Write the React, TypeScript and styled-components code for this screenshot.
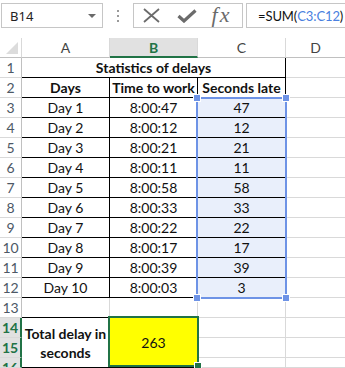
import { Fragment } from "react";
import styled, { createGlobalStyle } from "styled-components";

const GlobalStyle = createGlobalStyle`
  body {
    margin: 0;
    background: #fff;
    font-family: Lato, "Liberation Sans", sans-serif;
  }
`;

const GREEN = "#217346";
const GRID = "#d9d9d9";
const INK = "#111";

const Window = styled.div`
  width: 345px;
  height: 368px;
  overflow: hidden;
  background: #fff;
`;

/* ---------- formula bar ---------- */

const Bar = styled.div`
  display: flex;
  height: 25px;
  margin-top: 3px;
  padding-left: 1px;
  margin-bottom: 10px;
`;

const NameBox = styled.div`
  box-sizing: border-box;
  width: 102px;
  flex: none;
  border: 1px solid #c6c6c6;
  display: flex;
  align-items: center;
  justify-content: space-between;
  padding: 0 6px 0 8px;
  font-family: "Noto Sans", sans-serif;
  font-size: 13px;
  color: #222;
`;

const DropArrow = styled.span`
  width: 0;
  height: 0;
  border-left: 4px solid transparent;
  border-right: 4px solid transparent;
  border-top: 4px solid #6a6a6a;
`;

const Dots = styled.div`
  width: 30px;
  flex: none;
  display: flex;
  flex-direction: column;
  align-items: center;
  justify-content: center;
  gap: 3px;

  span {
    width: 2px;
    height: 2px;
    background: #9a9a9a;
  }
`;

const Buttons = styled.div`
  box-sizing: border-box;
  width: 110px;
  flex: none;
  border: 1px solid #c6c6c6;
  display: flex;
  align-items: center;
`;

const IconSlot = styled.div`
  width: 35px;
  height: 100%;
  display: flex;
  align-items: center;
  justify-content: center;
`;

const Fx = styled.span`
  font-family: "Liberation Serif", serif;
  font-style: italic;
  font-size: 22px;
  letter-spacing: 2px;
  color: #6a6a6a;
  line-height: 1;
  margin-top: -2px;
`;

const FormulaBox = styled.div`
  box-sizing: border-box;
  width: 240px;
  flex: none;
  margin-left: 3px;
  border: 1px solid #c6c6c6;
  border-right: none;
  display: flex;
  align-items: center;
  padding-left: 11px;
  font-size: 13px;
  letter-spacing: -0.1px;
  color: #111;
  white-space: nowrap;
`;

const Ref = styled.span`
  color: #4a7fe0;
`;

/* ---------- sheet ---------- */

const Sheet = styled.div`
  position: relative;
  display: grid;
  grid-template-columns: 22px 88px 88px 88px 60px;
  grid-template-rows: repeat(16, 20px) 10px;
`;

type CellProps = {
  $col?: string;
  $row?: string;
  $right?: string;
  $bottom?: string;
  $bold?: boolean;
  $bg?: string;
};

const Cell = styled.div<CellProps>`
  box-sizing: border-box;
  grid-column: ${(p) => p.$col || "auto"};
  grid-row: ${(p) => p.$row || "auto"};
  border-right: 1px solid ${(p) => p.$right || GRID};
  border-bottom: 1px solid ${(p) => p.$bottom || GRID};
  background: ${(p) => p.$bg || "#fff"};
  display: flex;
  align-items: center;
  justify-content: center;
  text-align: center;
  font-size: 14px;
  line-height: 19px;
  font-weight: ${(p) => (p.$bold ? 700 : 400)};
  color: ${INK};
  white-space: nowrap;
  overflow: hidden;
`;

const Corner = styled.div`
  position: relative;
  box-sizing: border-box;
  border-right: 1px solid ${GRID};
  border-bottom: 1px solid #c0c0c0;

  &::after {
    content: "";
    position: absolute;
    right: 3px;
    bottom: 3px;
    border-left: 12px solid transparent;
    border-bottom: 12px solid #dcdcdc;
  }
`;

const ColHead = styled.div<{ $active?: boolean }>`
  box-sizing: border-box;
  border-right: 1px solid ${GRID};
  border-bottom: ${(p) => (p.$active ? `2px solid ${GREEN}` : "1px solid #c0c0c0")};
  background: ${(p) => (p.$active ? "#e1e1e1" : "#fff")};
  color: ${(p) => (p.$active ? GREEN : "#444")};
  font-weight: ${(p) => (p.$active ? 700 : 400)};
  font-size: 14px;
  display: flex;
  align-items: center;
  justify-content: center;
`;

const RowHead = styled.div<{ $active?: boolean }>`
  box-sizing: border-box;
  border-right: ${(p) => (p.$active ? `2px solid ${GREEN}` : `1px solid #c0c0c0`)};
  border-bottom: 1px solid ${GRID};
  background: ${(p) => (p.$active ? "#e1e1e1" : "#fff")};
  color: ${(p) => (p.$active ? GREEN : "#4d5866")};
  font-weight: ${(p) => (p.$active ? 700 : 400)};
  font-size: 14px;
  line-height: 19px;
  text-align: center;
  overflow: hidden;
`;

const RefBox = styled.div`
  position: absolute;
  left: 196px;
  top: 59px;
  width: 91px;
  height: 202px;
  box-sizing: border-box;
  border: 2px solid #6e93e6;
  pointer-events: none;
`;

const Handle = styled.span<{ $x: string; $y: string }>`
  position: absolute;
  width: 6px;
  height: 6px;
  background: #6e93e6;
  border: 1px solid #fff;
  ${(p) => p.$x}: -5px;
  ${(p) => p.$y}: -5px;
`;

const Selection = styled.div`
  position: absolute;
  left: 108px;
  top: 278px;
  width: 91px;
  height: 51px;
  box-sizing: border-box;
  border: 2px solid ${GREEN};
  pointer-events: none;
`;

const FillHandle = styled.span`
  position: absolute;
  right: -5px;
  bottom: -5px;
  width: 6px;
  height: 6px;
  background: ${GREEN};
  border: 1px solid #fff;
`;

const data: [string, string, number][] = [
  ["Day 1", "8:00:47", 47],
  ["Day 2", "8:00:12", 12],
  ["Day 3", "8:00:21", 21],
  ["Day 4", "8:00:11", 11],
  ["Day 5", "8:00:58", 58],
  ["Day 6", "8:00:33", 33],
  ["Day 7", "8:00:22", 22],
  ["Day 8", "8:00:17", 17],
  ["Day 9", "8:00:39", 39],
  ["Day 10", "8:00:03", 3],
];

const BLUE_FILL = "#e9effb";

function App() {
  const total = data.reduce((s, d) => s + d[2], 0);

  return (
    <Window>
      <GlobalStyle />
      <Bar>
        <NameBox>
          B14
          <DropArrow />
        </NameBox>
        <Dots>
          <span />
          <span />
          <span />
        </Dots>
        <Buttons>
          <IconSlot>
            <svg width="17" height="15" viewBox="0 0 17 15">
              <path d="M1 1 L16 14 M16 1 L1 14" stroke="#6b6b6b" strokeWidth="1.8" fill="none" />
            </svg>
          </IconSlot>
          <IconSlot>
            <svg width="20" height="14" viewBox="0 0 20 14">
              <path d="M1.5 7 L7 12 L18.5 1.5" stroke="#6b6b6b" strokeWidth="3.2" fill="none" />
            </svg>
          </IconSlot>
          <IconSlot>
            <Fx>fx</Fx>
          </IconSlot>
        </Buttons>
        <FormulaBox>
          =SUM(<Ref>C3:C12</Ref>)
        </FormulaBox>
      </Bar>

      <Sheet>
        <Corner />
        <ColHead>A</ColHead>
        <ColHead $active>B</ColHead>
        <ColHead>C</ColHead>
        <ColHead>D</ColHead>

        <RowHead>1</RowHead>
        <Cell $col="2 / span 3" $right="#000" $bottom="#000" $bold>
          Statistics of delays
        </Cell>
        <Cell />

        <RowHead>2</RowHead>
        <Cell $right="#000" $bottom="#000" $bold>Days</Cell>
        <Cell $right="#000" $bottom="#000" $bold>Time to work</Cell>
        <Cell $right="#000" $bottom="#000" $bold>Seconds late</Cell>
        <Cell />

        {data.map(([day, time, secs], i) => (
          <Fragment key={day}>
            <RowHead>{i + 3}</RowHead>
            <Cell $right="#000" $bottom="#000">{day}</Cell>
            <Cell $right="#000" $bottom="#000">{time}</Cell>
            <Cell $right="#000" $bottom="#000" $bg={BLUE_FILL}>{secs}</Cell>
            <Cell />
          </Fragment>
        ))}

        <RowHead>13</RowHead>
        <Cell $bottom="#000" />
        <Cell $bottom="#000" />
        <Cell />
        <Cell />

        <RowHead $active>14</RowHead>
        <Cell $col="2" $row="15 / span 3" $right="#000" $bottom="#000" $bold>
          <span>
            Total delay in
            <br />
            seconds
          </span>
        </Cell>
        <Cell $col="3" $row="15 / span 3" $right="#000" $bottom="#000" $bg="#ffff00">
          {total}
        </Cell>
        <Cell $col="4" $row="15" />
        <Cell $col="5" $row="15" />

        <RowHead $active>15</RowHead>
        <Cell $col="4" $row="16" />
        <Cell $col="5" $row="16" />

        <RowHead $active>16</RowHead>
        <Cell $col="4" $row="17" />
        <Cell $col="5" $row="17" />

        <RefBox>
          <Handle $x="left" $y="top" />
          <Handle $x="right" $y="top" />
          <Handle $x="left" $y="bottom" />
          <Handle $x="right" $y="bottom" />
        </RefBox>
        <Selection>
          <FillHandle />
        </Selection>
      </Sheet>
    </Window>
  );
}

export default App;
